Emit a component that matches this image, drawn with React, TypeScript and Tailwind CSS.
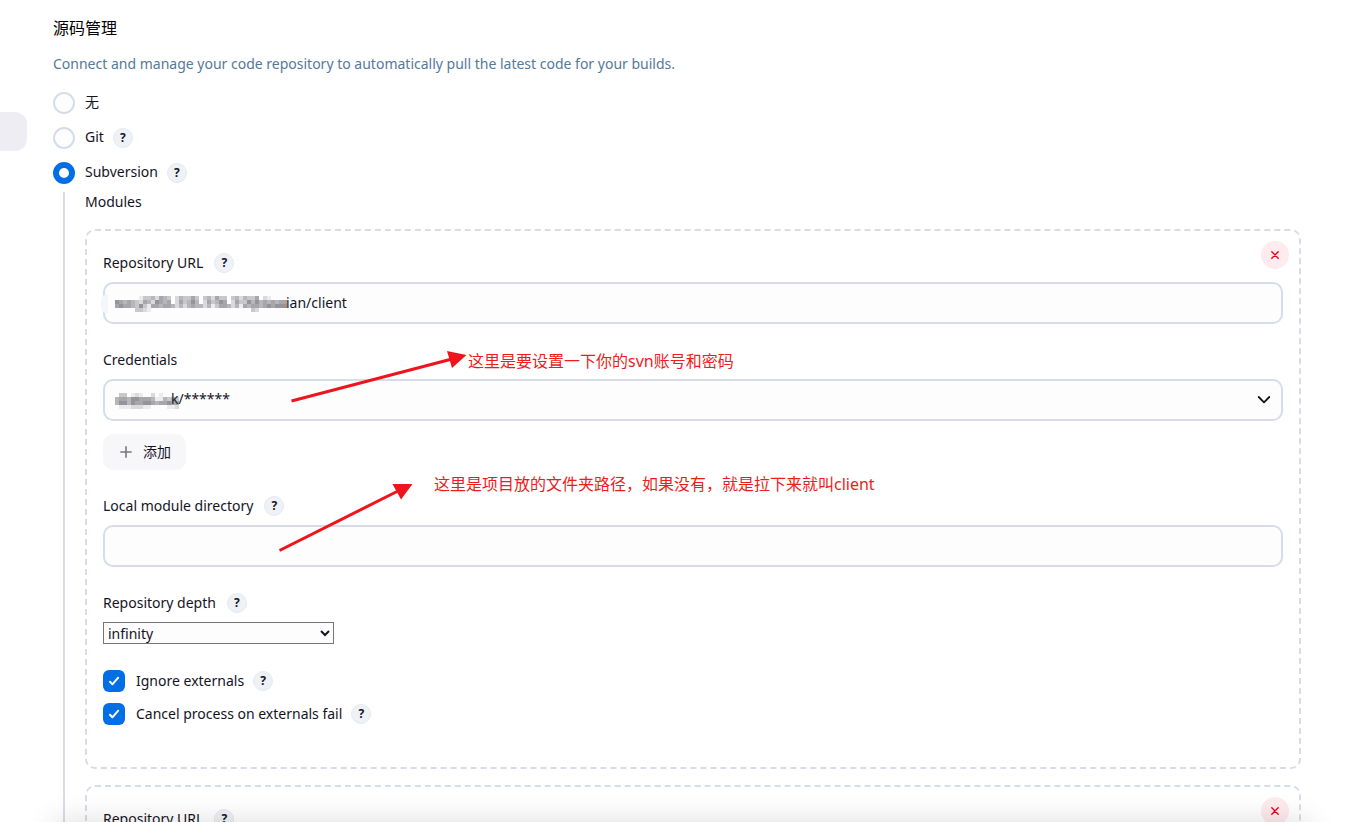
import type { ReactNode } from "react";

const URL_MOSAIC = [
  "0000001334254302433530342533034243350210000",
  "6545432542654502534640253465025336464545455",
  "5655436315545542424544241355424154554565666",
  "0000033210000000000000000000000000320000000",
];

const CREDENTIAL_MOSAIC = [
  "0330121002010000",
  "4554665554114343",
  "4664655665455655",
  "0111222110000112",
];

function Mosaic({ rows, className }: { rows: string[]; className: string }) {
  return (
    <svg
      className={`pointer-events-none absolute ${className}`}
      width={rows[0].length * 4}
      height={rows.length * 4}
      shapeRendering="crispEdges"
      aria-hidden="true"
    >
      {rows.flatMap((row, y) =>
        row.split("").map((v, x) => (
          <rect key={`${x}-${y}`} x={x * 4} y={y * 4} width={4} height={4} fill="#30303a" fillOpacity={Number(v) * 0.085} />
        )),
      )}
    </svg>
  );
}

function Help({ topic }: { topic: string }) {
  return (
    <button
      type="button"
      aria-label={`Help for ${topic}`}
      className="flex size-5 shrink-0 items-center justify-center rounded-full border border-[#e6eaef] bg-[#eef1f5] text-[12px] leading-none font-bold text-[#14141f]"
    >
      ?
    </button>
  );
}

function Label({ id, text, help = true }: { id: string; text: string; help?: boolean }) {
  return (
    <div className="mb-[9px] flex h-5 items-center gap-[11px]">
      <label htmlFor={id}>{text}</label>
      {help && <Help topic={text} />}
    </div>
  );
}

function Radio({ id, label, help, checked }: { id: string; label: string; help?: boolean; checked?: boolean }) {
  return (
    <div className="flex h-[22px] items-center">
      <input
        id={id}
        type="radio"
        name="scm"
        defaultChecked={checked}
        className="size-[22px] shrink-0 appearance-none rounded-full border-2 border-[#d6dde8] bg-[#fdfdfd] checked:border-[6px] checked:border-[#006fe6] checked:bg-white"
      />
      <label htmlFor={id} className="mr-[9px] mb-0.5 ml-[10px] leading-5">
        {label}
      </label>
      {help && <Help topic={label} />}
    </div>
  );
}

function Checkbox({ id, label }: { id: string; label: string }) {
  return (
    <div className="flex h-[22px] items-center">
      <span className="relative flex size-[22px] shrink-0">
        <input
          id={id}
          type="checkbox"
          defaultChecked
          className="peer size-[22px] appearance-none rounded-md border-2 border-[#d6dde8] checked:border-0 checked:bg-[#006fe6]"
        />
        <svg
          viewBox="0 0 22 22"
          className="pointer-events-none absolute inset-0 hidden peer-checked:block"
          fill="none"
          stroke="white"
          strokeWidth="2"
          strokeLinecap="round"
          strokeLinejoin="round"
          aria-hidden="true"
        >
          <path d="M7 11.8 L9.4 14.3 L15.2 7.7" />
        </svg>
      </span>
      <label htmlFor={id} className="mr-[9px] ml-[11px]">
        {label}
      </label>
      <Help topic={label} />
    </div>
  );
}

const fieldStyle =
  "block h-[42px] w-full appearance-none rounded-[10px] border-2 border-[#d6dde8] bg-[#fdfdfd] pb-0.5 outline-none";

function Annotations() {
  return (
    <div className="pointer-events-none absolute inset-0 text-[16px] leading-6 text-[#ee1c1c]">
      <svg className="absolute top-0 left-0" width="400" height="340" viewBox="87 231 400 340" fill="#ed141c" stroke="#ed141c" aria-hidden="true">
        <path d="M291.5 401 L452 359" strokeWidth="3" />
        <path d="M447 351 L466.5 355 L452 368 Z" stroke="none" />
        <path d="M279.5 550.5 L398 491" strokeWidth="3" />
        <path d="M392.5 484 L412.5 484 L401 499.5 Z" stroke="none" />
      </svg>
      <p className="absolute top-[118px] left-[381px] whitespace-nowrap">这里是要设置一下你的svn账号和密码</p>
      <p className="absolute top-[241px] left-[347px] whitespace-nowrap">
        这里是项目放的文件夹路径，如果没有，就是拉下来就叫client
      </p>
    </div>
  );
}

function Module({ prefix, url, urlPadding, urlCover, credentialCover, notes }: {
  prefix: string;
  url: string;
  urlPadding: string;
  urlCover?: ReactNode;
  credentialCover?: ReactNode;
  notes?: ReactNode;
}) {
  return (
    <section className="relative rounded-[10px] border-2 border-dashed border-[#d6dde8] px-4 pt-[22px] pb-[42px]">
      <button
        type="button"
        aria-label="Delete module"
        className="absolute top-[10px] right-[10px] flex size-7 items-center justify-center rounded-full bg-[#fdebed] text-[#e6001f]"
      >
        <svg width="10" height="10" viewBox="0 0 10 10" fill="none" stroke="currentColor" strokeWidth="1.4" strokeLinecap="round" aria-hidden="true">
          <path d="M1.8 1.8 L8.2 8.2 M8.2 1.8 L1.8 8.2" />
        </svg>
      </button>

      <div className="mb-[26px]">
        <Label id={`${prefix}-url`} text="Repository URL" />
        <div className="relative">
          <input id={`${prefix}-url`} type="text" defaultValue={url} className={`${fieldStyle} ${urlPadding}`} />
          {urlCover}
        </div>
      </div>

      <div className="mb-[26px]">
        <Label id={`${prefix}-credentials`} text="Credentials" help={false} />
        <div className="relative">
          <select id={`${prefix}-credentials`} className={`${fieldStyle} pr-10 pl-[66px]`}>
            <option>k/******</option>
          </select>
          {credentialCover}
          <svg
            className="pointer-events-none absolute top-[14px] right-3"
            width="14"
            height="14"
            viewBox="0 0 14 14"
            fill="none"
            stroke="#14141f"
            strokeWidth="1.8"
            strokeLinecap="round"
            strokeLinejoin="round"
            aria-hidden="true"
          >
            <path d="M1.7 4 L7 9.3 L12.3 4" />
          </svg>
        </div>
        <button type="button" className="mt-[13px] flex h-9 items-center gap-[11px] rounded-[10px] bg-[#f7f7fa] pr-[15px] pl-[17px]">
          <svg width="12" height="12" viewBox="0 0 12 12" stroke="#77777f" strokeWidth="1.6" aria-hidden="true">
            <path d="M6 0.3 V11.7 M0.3 6 H11.7" />
          </svg>
          添加
        </button>
      </div>

      <div className="mb-[26px]">
        <Label id={`${prefix}-local`} text="Local module directory" />
        <input id={`${prefix}-local`} type="text" className={`${fieldStyle} px-[10px]`} />
      </div>

      <div className="mb-[26px]">
        <Label id={`${prefix}-depth`} text="Repository depth" />
        <select id={`${prefix}-depth`} className="block h-[22px] w-[231px] border border-[#767676] bg-[#fdfdfd] leading-5">
          <option>infinity</option>
        </select>
      </div>

      <div className="flex flex-col gap-[11px]">
        <Checkbox id={`${prefix}-ignore`} label="Ignore externals" />
        <Checkbox id={`${prefix}-cancel`} label="Cancel process on externals fail" />
      </div>
      {notes}
    </section>
  );
}

export default function App() {
  return (
    <div className="relative flex h-screen overflow-hidden bg-white font-['Noto_Sans','Noto_Sans_CJK_SC',sans-serif] text-[14px] leading-5 text-[#14141f]">
      <aside className="w-[27px] shrink-0 pt-28">
        <div className="h-[39px] rounded-r-xl bg-[#ededf3]" />
      </aside>

      <main className="min-w-0 flex-1 pt-4 pr-[62px] pl-[26px]">
        <h1 className="text-[16px] leading-6 text-black">源码管理</h1>
        <p className="mt-[14px] text-[#54799a]">
          Connect and manage your code repository to automatically pull the latest code for your builds.
        </p>

        <div className="mt-[18px] flex flex-col gap-[13px]">
          <Radio id="scm-none" label="无" />
          <Radio id="scm-git" label="Git" help />
          <Radio id="scm-svn" label="Subversion" help checked />
        </div>

        <div className="mt-2 ml-[10px] border-l-2 border-[#d6dde8] pl-5">
          <h2 className="mb-[17px] leading-5">Modules</h2>
          <div className="flex flex-col gap-4">
            <Module
              prefix="first"
              url="ian/client"
              urlPadding="pr-[10px] pl-[181px]"
              urlCover={
                <>
                  <span className="absolute top-3 -left-[2px] h-5 w-[7px] rounded-l-full bg-[#f5f5fa]" />
                  <Mosaic rows={URL_MOSAIC} className="top-[14px] left-[12px]" />
                </>
              }
              credentialCover={<Mosaic rows={CREDENTIAL_MOSAIC} className="top-[14px] left-[12px]" />}
              notes={<Annotations />}
            />
            <Module prefix="second" url="" urlPadding="px-[10px]" />
          </div>
        </div>
      </main>

      <div className="pointer-events-none absolute inset-x-[53px] top-full h-16 shadow-[0_0_30px_rgba(0,0,0,0.14)]" />
    </div>
  );
}
